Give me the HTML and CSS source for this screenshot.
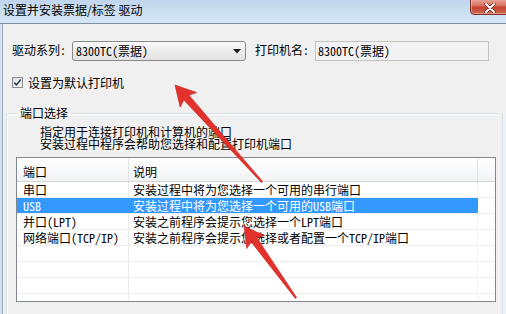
FILE: index.html
```html
<!DOCTYPE html>
<html lang="zh-CN">
<head>
<meta charset="utf-8">
<title>设置并安装票据/标签 驱动</title>
<link rel="stylesheet" href="styles.css">
</head>
<body>
<div class="window">
  <div class="titlebar">
    <span class="title">设置并安装票据/标签 驱动</span>
    <div class="close">
      <svg width="12" height="10" viewBox="0 0 12 10"><path d="M2 1 L10 9 M10 1 L2 9" stroke="#6a2a22" stroke-width="3.2" stroke-linecap="round"/><path d="M2 1 L10 9 M10 1 L2 9" stroke="#ffffff" stroke-width="1.8" stroke-linecap="round"/></svg>
    </div>
  </div>
  <div class="client">
    <div class="top-row">
      <span class="lbl">驱动系列:</span>
      <div class="combo">
        <span class="combo-text">8300TC(票据)</span>
        <svg class="caret" width="8" height="5" viewBox="0 0 8 5"><path d="M0 0 H8 L4 4.5 Z" fill="#1a1a1a"/></svg>
      </div>
      <span class="lbl lbl-printer">打印机名:</span>
      <div class="textbox">8300TC(票据)</div>
    </div>
    <div class="check-row">
      <span class="checkbox">
        <svg width="9" height="9" viewBox="0 0 9 9"><path d="M1.3 4.6 L3.5 6.9 L7.8 1.6" fill="none" stroke="#2b3f5c" stroke-width="1.6"/></svg>
      </span>
      <span class="check-label">设置为默认打印机</span>
    </div>
    <fieldset class="group">
      <legend class="group-title">端口选择</legend>
      <div class="desc">指定用于连接打印机和计算机的端口<br>安装过程中程序会帮助您选择和配置打印机端口</div>
      <div class="list">
        <div class="list-head">
          <div class="hcell c1">端口</div>
          <div class="hcell c2">说明</div>
          <div class="hcell c3"></div>
        </div>
        <div class="row"><div class="cell c1">串口</div><div class="cell c2">安装过程中将为您选择一个可用的串行端口</div></div>
        <div class="row selected"><div class="cell c1">USB</div><div class="cell c2">安装过程中将为您选择一个可用的USB端口</div></div>
        <div class="row"><div class="cell c1">并口(LPT)</div><div class="cell c2">安装之前程序会提示您选择一个LPT端口</div></div>
        <div class="row"><div class="cell c1">网络端口(TCP/IP)</div><div class="cell c2">安装之前程序会提示您选择或者配置一个TCP/IP端口</div></div>
        <div class="row"><div class="cell c1"></div><div class="cell c2"></div></div>
        <div class="row"><div class="cell c1"></div><div class="cell c2"></div></div>
        <div class="row"><div class="cell c1"></div><div class="cell c2"></div></div>
        <div class="row short"><div class="cell c1"></div><div class="cell c2"></div></div>
      </div>
    </fieldset>
  </div>
  <svg class="arrows" width="506" height="314" viewBox="0 0 506 314">
    <polygon points="175,85 180.2,107.2 183.8,99.9 261.4,182.5 262.6,181.5 189,95.3 196.6,92.6" fill="#e3322c" stroke="#c41f1a" stroke-width="0.6" stroke-linejoin="round"/>
    <polygon points="244,226 246.8,248.6 251.2,241.9 295.4,298.5 296.6,297.5 256.8,237.7 264.6,235.8" fill="#e3322c" stroke="#c41f1a" stroke-width="0.6" stroke-linejoin="round"/>
  </svg>
</div>
</body>
</html>
```

FILE: styles.css
```css
* { box-sizing: border-box; }

html, body {
  margin: 0;
  padding: 0;
}

body {
  width: 506px;
  height: 314px;
  overflow: hidden;
  background: #d3e2f2;
  font-family: "Noto Sans Mono CJK SC", "Noto Sans CJK SC", sans-serif;
  font-size: 12px;
  color: #000;
}

.window {
  position: relative;
  width: 506px;
  height: 314px;
  overflow: hidden;
}

.titlebar {
  display: flex;
  align-items: flex-start;
  height: 24px;
  background: linear-gradient(#c0d6ee, #d7e6f5);
  border-bottom: 1px solid #7f91a6;
}

.title {
  font-family: "Noto Sans CJK SC", sans-serif;
  font-size: 12px;
  line-height: 20px;
  margin-left: 3px;
  color: #000;
}

.close {
  margin-left: auto;
  margin-right: -9px;
  margin-top: -2px;
  width: 45px;
  height: 17px;
  border: 1px solid #7d3128;
  border-radius: 0 0 0 4px;
  background: linear-gradient(#e9ab9f, #d9705f 45%, #c4412f 55%, #cf6a52);
  box-shadow: inset 0 0 0 1px rgba(255, 210, 200, 0.45);
  display: flex;
  align-items: center;
  justify-content: center;
  padding-top: 2px;
  padding-right: 6px;
}

.client {
  height: 290px;
  margin-left: 2px;
  border-left: 1px solid #9ba8b6;
  background: #f0f0f0;
  padding-top: 17px;
}

.top-row {
  display: flex;
  align-items: center;
  height: 20px;
  padding-left: 9px;
}

.lbl {
  width: 60px;
  line-height: 16px;
  margin-top: -2px;
}

.lbl-printer {
  margin-left: 9px;
}

.combo {
  width: 174px;
  height: 20px;
  border: 1px solid #8a8a8a;
  border-radius: 3px;
  background: linear-gradient(#fafafa, #ececec 50%, #e2e2e2);
  display: flex;
  align-items: center;
  padding-left: 3px;
  padding-right: 4px;
}

.combo-text {
  flex: 1;
  line-height: 16px;
}

.caret {
  display: block;
  margin-top: 1px;
}

.textbox {
  width: 174px;
  height: 20px;
  border: 1px solid #c3c3c3;
  background: #f2f2f2;
  padding-left: 2px;
  line-height: 17px;
}

.check-row {
  display: flex;
  align-items: center;
  height: 13px;
  margin-top: 15px;
  padding-left: 9px;
}

.checkbox {
  width: 11px;
  height: 11px;
  border: 1px solid #8c8c8c;
  background: linear-gradient(135deg, #dcdcdc, #fbfbfb);
  display: flex;
  align-items: center;
  justify-content: center;
}

.checkbox svg { display: block; }

.check-label {
  margin-left: 5px;
  line-height: 14px;
}

.group {
  margin: 17px 3px 0 3px;
  padding: 0 6px 0 9px;
  border: 1px solid #d5dfe5;
  border-radius: 3px;
  box-shadow: inset 1px 1px 0 #ffffff;
  min-width: 0;
  height: 220px;
}

.group-title {
  padding: 0 3px;
  margin-left: 1px;
  line-height: 14px;
}

.desc {
  margin-top: 6px;
  margin-left: 24px;
  line-height: 12px;
}

.list {
  margin-top: 7px;
  width: 480px;
  height: 145px;
  border: 1px solid #828790;
  background: #ffffff;
  overflow: hidden;
}

.list-head {
  display: flex;
  height: 24px;
  background: linear-gradient(#ffffff, #f7f8f9 60%, #f1f2f4);
  border-bottom: 1px solid #d5d5d5;
}

.hcell {
  height: 23px;
  line-height: 23px;
  padding-top: 2px;
  border-right: 1px solid #e1e2e4;
}

.c1 {
  width: 112px;
  padding-left: 6px;
  flex: none;
}

.c2 {
  width: 349px;
  padding-left: 4px;
  flex: none;
}

.c3 {
  flex: 1;
  border-right: none;
}

.row {
  display: flex;
  height: 16px;
  border-bottom: 1px solid #efefef;
}

.row.short {
  height: 8px;
  border-bottom: none;
}

.cell {
  height: 100%;
  line-height: 15px;
  white-space: nowrap;
  overflow: hidden;
}

.cell.c1 {
  border-right: 1px solid #eaeaea;
}

.cell.c2 {
  border-right: 1px solid #f3f3f3;
}

.row.selected .cell {
  background: #3399ff;
  color: #ffffff;
  border-right-color: #3399ff;
}

.arrows {
  position: absolute;
  left: 0;
  top: 0;
  pointer-events: none;
}
```
